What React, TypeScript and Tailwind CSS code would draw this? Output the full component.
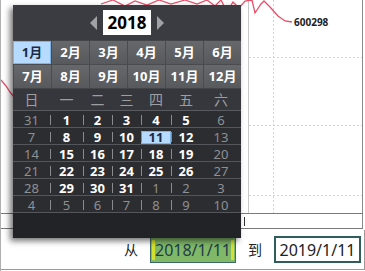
const months = ["1月", "2月", "3月", "4月", "5月", "6月", "7月", "8月", "9月", "10月", "11月", "12月"];
const weekdays = ["日", "一", "二", "三", "四", "五", "六"];

// [day, inMonth]
const weeks: [number, boolean][][] = [
  [[31, false], [1, true], [2, true], [3, true], [4, true], [5, true], [6, true]],
  [[7, true], [8, true], [9, true], [10, true], [11, true], [12, true], [13, true]],
  [[14, true], [15, true], [16, true], [17, true], [18, true], [19, true], [20, true]],
  [[21, true], [22, true], [23, true], [24, true], [25, true], [26, true], [27, true]],
  [[28, true], [29, true], [30, true], [31, true], [1, false], [2, false], [3, false]],
  [[4, false], [5, false], [6, false], [7, false], [8, false], [9, false], [10, false]],
];

const cols = "grid grid-cols-[37px_33px_29px_29px_30px_30px_40px]";
const font = { fontFamily: '"Noto Sans", "Noto Sans CJK SC", sans-serif' };

function Chart() {
  return (
    <svg width="365" height="230" className="block">
      {/* grid */}
      <line x1="247.5" y1="0" x2="247.5" y2="214" stroke="#c8c8c8" />
      <line x1="272.5" y1="0" x2="272.5" y2="214" stroke="#d4d4d4" strokeDasharray="2 2" />
      <line x1="248" y1="57.5" x2="361" y2="57.5" stroke="#d4d4d4" strokeDasharray="2 2" />
      <line x1="248" y1="125.5" x2="361" y2="125.5" stroke="#d4d4d4" strokeDasharray="2 2" />
      <line x1="248" y1="195.5" x2="361" y2="195.5" stroke="#d4d4d4" strokeDasharray="2 2" />
      <line x1="361.5" y1="0" x2="361.5" y2="229" stroke="#8a8a8a" />
      <line x1="0" y1="213.5" x2="362" y2="213.5" stroke="#7a7a7a" />
      <line x1="0" y1="228.5" x2="362" y2="228.5" stroke="#7a7a7a" />
      <line x1="243.5" y1="217" x2="243.5" y2="226" stroke="#333" />
      {/* series */}
      <polyline
        fill="none"
        stroke="#e8506a"
        strokeWidth="1.3"
        points="100,4 112,0 124,6 134,1 146,5 158,0 170,4 184,0 196,4 206,0 214,6 220,0 226,12 232,2 238,8 244,1 251,0 254,13 260,4 263,1 269,7 277,16 284,21 291,22"
      />
      <polyline fill="none" stroke="#e8506a" strokeWidth="1.3" points="0,80 5,86 9,92 13,97" />
      <text x="293" y="26" fontSize="10" fontWeight="700" fill="#222" style={font}>
        600298
      </text>
    </svg>
  );
}

function Picker() {
  return (
    <div
      className="absolute left-[12px] top-[5px] w-[228px] h-[233px] bg-[#2a2b2f] shadow-[-3px_3px_6px_rgba(0,0,0,0.55)] flex flex-col"
      style={font}
    >
      {/* year header */}
      <div className="h-[35px] bg-[#3a3c41] flex items-center justify-center gap-[6px]">
        <span className="w-0 h-0 border-y-[7px] border-y-transparent border-r-[7px] border-r-[#a0a2a6]" />
        <span className="w-[48px] h-[25px] bg-white flex items-center justify-center text-[17px] font-bold text-black">
          2018
        </span>
        <span className="w-0 h-0 border-y-[7px] border-y-transparent border-l-[7px] border-l-[#a0a2a6]" />
      </div>
      {/* months */}
      <div className="grid grid-cols-6 grid-rows-[23px_23px] gap-y-px bg-[#4a4b4f] border-y border-[#444549]">
        {months.map((m, i) => (
          <div
            key={m}
            className={
              i === 0
                ? "flex items-center justify-center text-[13px] font-bold text-[#1b2a44] bg-[#b6dbff] border border-[#7fb2e6]"
                : "flex items-center justify-center text-[13px] font-bold text-white bg-gradient-to-b from-[#67686c] to-[#58595d] border-l border-[#4a4b4f]"
            }
          >
            {m}
          </div>
        ))}
      </div>
      {/* weekdays */}
      <div className={`${cols} h-[22px] items-center bg-[#36373c] border-b border-[#5a5b60]`}>
        {weekdays.map((w) => (
          <div key={w} className="text-center text-[14px] text-[#9d9ea2]">
            {w}
          </div>
        ))}
      </div>
      {/* days */}
      {weeks.map((wk, r) => (
        <div key={r} className={`${cols} h-[17px] border-b border-[#55565b] bg-[#2c2d31]`}>
          {wk.map(([d, inMonth], c) => {
            const weekend = c === 0 || c === 6;
            const sel = r === 1 && c === 4;
            const sep = c >= 1 && c <= 5;
            return (
              <div key={c} className="relative flex items-center justify-center">
                {sep && <span className="absolute left-0 top-[4px] h-[10px] w-px bg-[#8a8b8f]" />}
                {sel ? (
                  <span className="w-[30px] h-[13px] bg-[#b6dbff] border border-[#7fb2e6] flex items-center justify-center text-[13px] font-bold text-[#1b2a44]">
                    {d}
                  </span>
                ) : (
                  <span
                    className={
                      inMonth && !weekend
                        ? "text-[13px] font-bold text-white"
                        : "text-[13px] text-[#8f9094]"
                    }
                  >
                    {d}
                  </span>
                )}
              </div>
            );
          })}
        </div>
      ))}
      <div className="flex-1 bg-[#222327]" />
    </div>
  );
}

export default function App() {
  return (
    <div
      className="w-[365px] h-[271px] bg-white relative overflow-hidden border-l border-[#b0b0b0]"
      style={font}
    >
      <div className="relative">
        <Chart />
        <Picker />
      </div>
      <div className="flex h-[40px] items-center justify-end pr-[3px] border-r border-b border-[#9a9a9a] w-[364px]">
        <span className="text-[14px] text-[#222] mr-[12px]">从</span>
        <div className="w-[86px] h-[26px] border border-[#3c6a66] bg-[#80b868] flex items-center justify-center">
          <span className="h-[20px] border-x-[3px] border-[#d4e030] flex items-center text-[16px] text-[#1e3c48] leading-none">
            2018/1/11
          </span>
        </div>
        <span className="text-[14px] text-[#222] mx-[12px]">到</span>
        <div className="w-[87px] h-[27px] border-2 border-[#2f5d5a] bg-white flex items-center justify-center text-[16px] text-[#222]">
          2019/1/11
        </div>
      </div>
    </div>
  );
}
